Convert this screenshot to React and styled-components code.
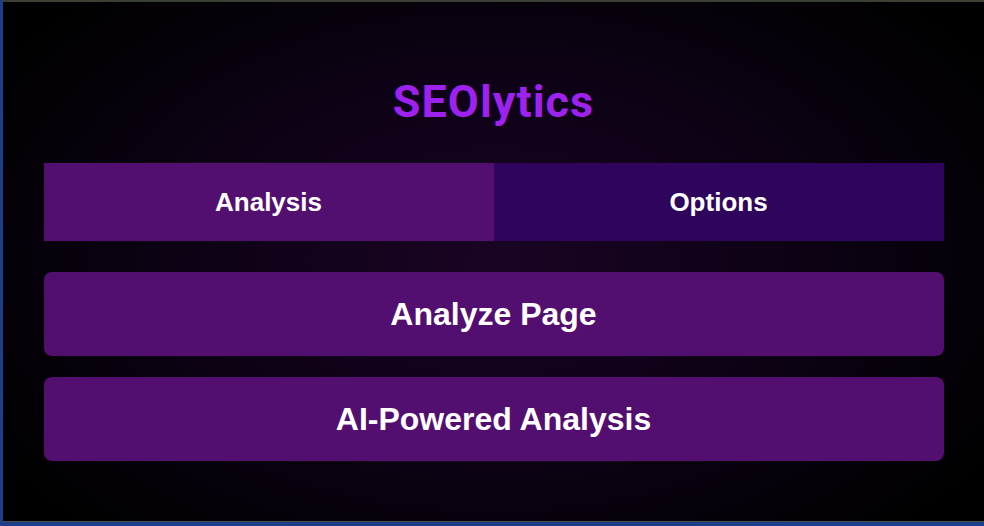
import React, { useState } from 'react';
import styled, { createGlobalStyle } from 'styled-components';

const GlobalStyle = createGlobalStyle`
  html, body {
    margin: 0;
    height: 526px;
    overflow: hidden;
    background: #1d3e8a;
  }
`;

const Frame = styled.div`
  margin-left: 3px;
  height: 522px;
  box-sizing: border-box;
  border-top: 2px solid #3b4035;
  border-bottom: 1px solid #4a4d48;
  background: radial-gradient(ellipse 60% 70% at 50% 50%, #1a0424 0%, #0c0214 55%, #000000 100%);
  display: flex;
  flex-direction: column;
  align-items: center;
  padding-top: 76px;
`;

const Title = styled.h1`
  margin: 0 0 37px;
  font-family: Roboto, "Liberation Sans", sans-serif;
  font-weight: 700;
  font-size: 45px;
  line-height: 48px;
  letter-spacing: 1px;
  color: #9d21ef;
`;

const Panel = styled.div`
  width: 900px;
  display: flex;
  flex-direction: column;
  gap: 21px;
`;

const Tabs = styled.div`
  display: grid;
  grid-template-columns: 1fr 1fr;
  height: 78px;
  margin-bottom: 10px;
`;

const Tab = styled.button`
  border: none;
  margin: 0;
  padding: 0;
  background: ${p => (p.$active ? '#530f6f' : '#2f045d')};
  color: #ffffff;
  font-family: "Liberation Sans", Arial, sans-serif;
  font-weight: 700;
  font-size: 26px;
  cursor: pointer;
`;

const ActionButton = styled.button`
  height: 84px;
  border: none;
  border-radius: 8px;
  background: #530f6f;
  color: #ffffff;
  font-family: "Liberation Sans", Arial, sans-serif;
  font-weight: 700;
  font-size: 32px;
  cursor: pointer;
`;

export default function App() {
  const [tab, setTab] = useState('analysis');

  return (
    <>
      <GlobalStyle />
      <Frame>
        <Title>SEOlytics</Title>
        <Panel>
          <Tabs>
            <Tab $active={tab === 'analysis'} onClick={() => setTab('analysis')}>Analysis</Tab>
            <Tab $active={tab === 'options'} onClick={() => setTab('options')}>Options</Tab>
          </Tabs>
          <ActionButton>Analyze Page</ActionButton>
          <ActionButton>AI-Powered Analysis</ActionButton>
        </Panel>
      </Frame>
    </>
  );
}
